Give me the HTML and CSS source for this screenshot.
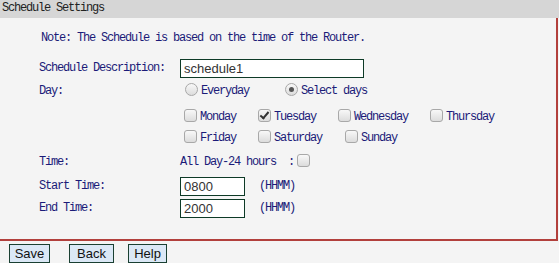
FILE: index.html
```html
<!DOCTYPE html>
<html lang="en">
<head>
  <meta charset="UTF-8">
  <title>Schedule Settings</title>
  <link rel="stylesheet" href="styles.css">
</head>
<body>

  <div class="title">Schedule Settings</div>

  <div class="panel">
    <div class="row note-row">Note: The Schedule is based on the time of the Router.</div>

    <div class="row desc-row">
      <span class="label">Schedule Description:</span>
      <input type="text" class="txt wide" value="schedule1">
    </div>

    <div class="row day-row">
      <span class="label">Day:</span>
      <label class="opt"><input type="radio" name="day">Everyday</label>
      <label class="opt sel"><input type="radio" name="day" checked>Select days</label>
    </div>

    <div class="row cb1-row">
      <span class="label"></span>
      <div class="days">
        <label class="opt"><input type="checkbox">Monday</label>
        <label class="opt"><input type="checkbox" checked>Tuesday</label>
        <label class="opt"><input type="checkbox">Wednesday</label>
        <label class="opt"><input type="checkbox">Thursday</label>
      </div>
    </div>

    <div class="row cb2-row">
      <span class="label"></span>
      <div class="days">
        <label class="opt"><input type="checkbox">Friday</label>
        <label class="opt"><input type="checkbox">Saturday</label>
        <label class="opt sun"><input type="checkbox">Sunday</label>
      </div>
    </div>

    <div class="row time-row">
      <span class="label">Time:</span>
      <span class="allday">All Day-24 hours  :</span><input type="checkbox" class="allday-cb">
    </div>

    <div class="row start-row">
      <span class="label">Start Time:</span>
      <input type="text" class="txt short" value="0800">
      <span class="hint">(HHMM)</span>
    </div>

    <div class="row end-row">
      <span class="label">End Time:</span>
      <input type="text" class="txt short" value="2000">
      <span class="hint">(HHMM)</span>
    </div>
  </div>

  <div class="btn-container">
    <button class="btn save">Save</button>
    <button class="btn back">Back</button>
    <button class="btn help">Help</button>
  </div>

</body>
</html>
```

FILE: styles.css
```css
body {
  margin: 0;
  background-color: #f4f4f4;
  font-family: "Liberation Mono", "DejaVu Sans Mono", monospace;
  font-size: 12px;
  letter-spacing: -1.2px;
  color: #1b1b78;
}

.title {
  height: 18px;
  line-height: 16px;
  padding-left: 2px;
  background-color: #d6d6d6;
  color: #222;
}

.panel {
  border-right: 2px solid #b2403c;
  border-bottom: 2px solid #b2403c;
  padding: 10px 0 21px 39px;
  margin-right: 1px;
}

.row {
  display: flex;
  align-items: center;
  height: 20px;
}

.note-row { padding-left: 2px; }
.desc-row { margin-top: 10px; }
.day-row { margin-top: 3px; }
.cb1-row { margin-top: 6px; }
.cb2-row { margin-top: 1px; }
.time-row { margin-top: 4px; }
.start-row { margin-top: 4px; }
.end-row { margin-top: 2px; }

.label {
  width: 141px;
  flex: none;
}

.txt {
  box-sizing: border-box;
  height: 19px;
  margin: 0;
  padding: 0 3px;
  border: 1px solid #0d3a26;
  background: #fff;
  font-family: "Liberation Sans", Arial, sans-serif;
  font-size: 13px;
  letter-spacing: 0;
  color: #333;
  outline: none;
}

.wide { width: 184px; }
.short { width: 65px; }

.hint {
  margin-left: 14px;
}

.opt {
  display: flex;
  align-items: center;
  white-space: pre;
}

.sel { margin-left: 31px; }

.days {
  display: flex;
  gap: 18px;
}

.sun { margin-left: 1px; }

.allday { white-space: pre; }

input[type="checkbox"],
input[type="radio"] {
  appearance: none;
  -webkit-appearance: none;
  box-sizing: border-box;
  width: 13px;
  height: 13px;
  margin: 0 3px 4px 4px;
  border: 1px solid #a8a8a8;
  border-radius: 3px;
  background: linear-gradient(#f8f8f8, #dcdcdc);
  position: relative;
}

input[type="radio"] {
  border-radius: 50%;
  margin: 0 3px 4px 5px;
}

input[type="radio"]:checked::after {
  content: "";
  position: absolute;
  left: 3px;
  top: 3px;
  width: 5px;
  height: 5px;
  border-radius: 50%;
  background: #555;
}

input[type="checkbox"]:checked::after {
  content: "";
  position: absolute;
  left: 3px;
  top: 0px;
  width: 3px;
  height: 7px;
  border-right: 2px solid #333;
  border-bottom: 2px solid #333;
  transform: rotate(40deg);
}

.allday-cb {
  margin-left: 3px !important;
}

.btn-container {
  display: flex;
  padding: 3px 0 0 9px;
}

.btn {
  box-sizing: border-box;
  height: 19px;
  padding: 0;
  border: 1px solid #1a4032;
  border-radius: 0;
  background-color: #dbe8f6;
  font-family: "Liberation Sans", Arial, sans-serif;
  font-size: 13px;
  color: #111;
}

.save { width: 41px; }
.back { width: 45px; margin-left: 19px; }
.help { width: 39px; margin-left: 14px; }
```
